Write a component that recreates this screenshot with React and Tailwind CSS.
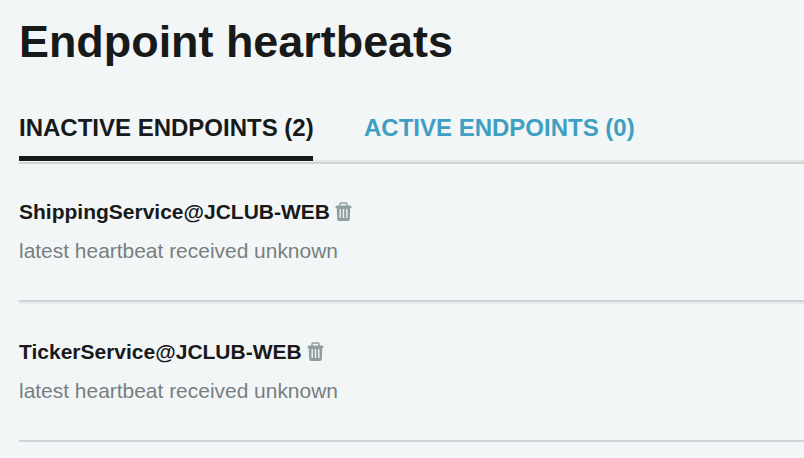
const endpoints = [
  { name: "ShippingService@JCLUB-WEB", frame: "h-[138px] pt-[28px]" },
  { name: "TickerService@JCLUB-WEB", frame: "h-[140px] border-t-2 border-t-[#e8ebec] pt-[28px]" },
];

function Trash() {
  return (
    <svg className="ml-[5px] mt-[10px] h-5 w-[17px] shrink-0" viewBox="0 0 17 20" fill="none" stroke="#929e9e">
      <path d="M5 4V2Q5 1 6 1h5q1 0 1 1v2" strokeWidth="1.5" />
      <path d="M0.5 5Q.5 3.5 2 3.5h13q1.5 0 1.5 1.5v1H.5z" fill="#929e9e" stroke="none" />
      <path d="M1.7 5.5h13.6l-.5 11.5q-.1 2-1.8 2H4q-1.7 0-1.8-2z" fill="#929e9e" stroke="none" />
      <path d="M5.2 7v9M8.5 7v9M11.8 7v9" stroke="#f2f6f7" strokeWidth="1.3" />
    </svg>
  );
}

export default function App() {
  return (
    <main className="h-screen overflow-hidden bg-[#f2f6f7] pl-[19px] font-['Liberation_Sans',Arial,sans-serif] text-[#181919]">
      <h1 className="pt-[16px] text-[44.9px] leading-[52px] font-bold whitespace-nowrap">Endpoint heartbeats</h1>
      <nav className="mt-[44px] flex h-[52px] border-b-2 border-[#ced3d3] text-[24px] leading-[32px] font-bold whitespace-nowrap">
        <span className="h-[49px] w-[294px] border-b-[5px] border-[#181919]">INACTIVE ENDPOINTS (2)</span>
        <span className="h-[50px] flex-1 border-b-2 border-[#e5e7e7] pl-[51px] text-[#3f9fc3]">ACTIVE ENDPOINTS (0)</span>
      </nav>
      {endpoints.map(({ name, frame }) => (
        <section key={name} className={`border-b-2 border-b-[#ced3d5] ${frame}`}>
          <div className="flex h-[39px] text-[21px] leading-[40px] font-bold">
            <span>{name}</span>
            <Trash />
          </div>
          <p className="text-[20.95px] leading-[40px] text-[#777f7f]">latest heartbeat received unknown</p>
        </section>
      ))}
    </main>
  );
}
